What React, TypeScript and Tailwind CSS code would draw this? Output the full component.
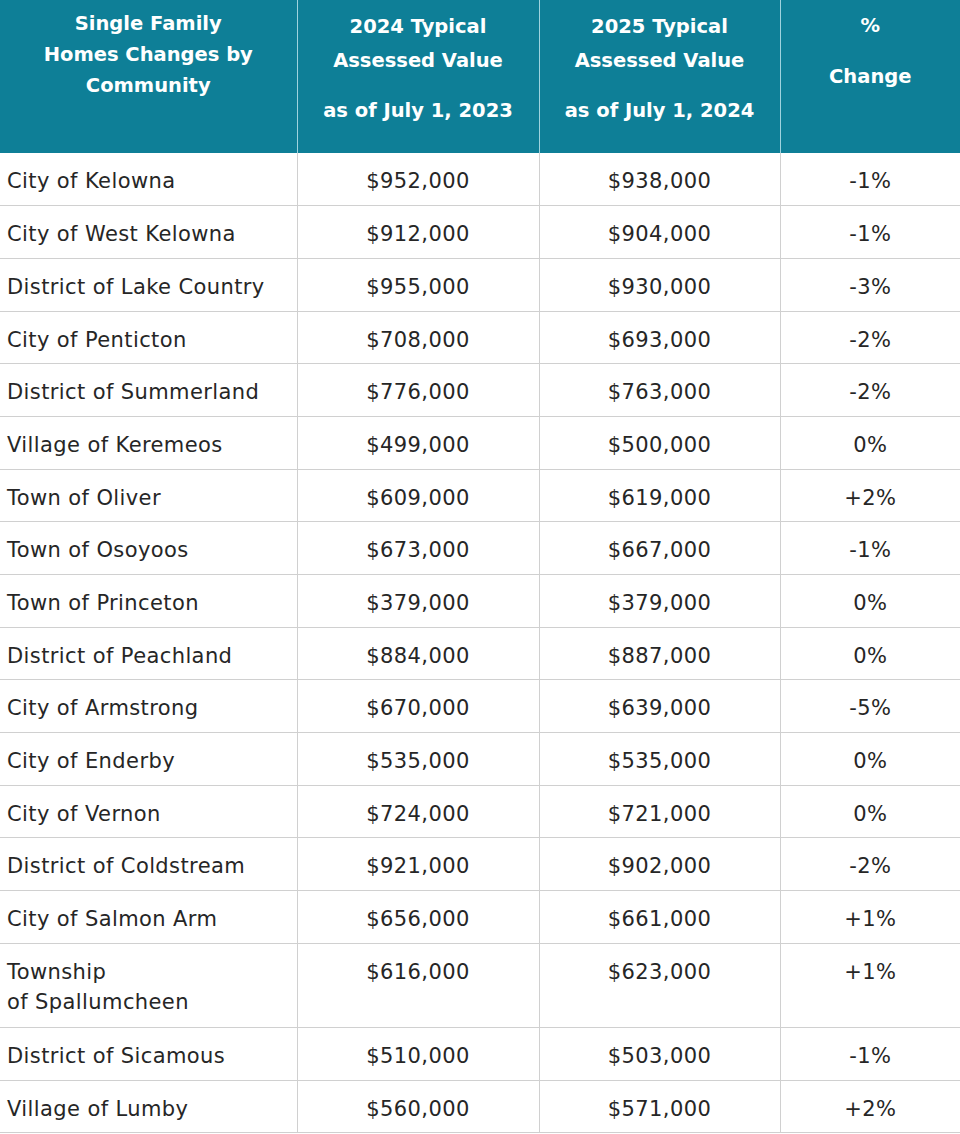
const rows: [string, string, string, string][] = [
  ["City of Kelowna", "$952,000", "$938,000", "-1%"],
  ["City of West Kelowna", "$912,000", "$904,000", "-1%"],
  ["District of Lake Country", "$955,000", "$930,000", "-3%"],
  ["City of Penticton", "$708,000", "$693,000", "-2%"],
  ["District of Summerland", "$776,000", "$763,000", "-2%"],
  ["Village of Keremeos", "$499,000", "$500,000", "0%"],
  ["Town of Oliver", "$609,000", "$619,000", "+2%"],
  ["Town of Osoyoos", "$673,000", "$667,000", "-1%"],
  ["Town of Princeton", "$379,000", "$379,000", "0%"],
  ["District of Peachland", "$884,000", "$887,000", "0%"],
  ["City of Armstrong", "$670,000", "$639,000", "-5%"],
  ["City of Enderby", "$535,000", "$535,000", "0%"],
  ["City of Vernon", "$724,000", "$721,000", "0%"],
  ["District of Coldstream", "$921,000", "$902,000", "-2%"],
  ["City of Salmon Arm", "$656,000", "$661,000", "+1%"],
  ["Township\nof Spallumcheen", "$616,000", "$623,000", "+1%"],
  ["District of Sicamous", "$510,000", "$503,000", "-1%"],
  ["Village of Lumby", "$560,000", "$571,000", "+2%"],
];

const App = () => {
  return (
    <div className="w-[960px] h-[1134px] overflow-hidden bg-white font-['DejaVu_Sans',sans-serif]">
      <table className="w-[960px] table-fixed border-collapse">
        <colgroup>
          <col className="w-[297px]" />
          <col className="w-[242px]" />
          <col className="w-[241px]" />
          <col className="w-[180px]" />
        </colgroup>
        <thead>
          <tr className="h-[153px] bg-[#0e7f97] text-white text-[19.5px] font-bold align-top">
            <th className="border-r border-[#9fd3de] px-4 pt-[8px] leading-[31px]">
              Single Family
              <br />
              Homes Changes by
              <br />
              Community
            </th>
            <th className="border-r border-[#9fd3de] px-2 pt-[10px] leading-[34px]">
              <p>2024 Typical</p>
              <p>Assessed Value</p>
              <p className="mt-[16px]">as of July 1, 2023</p>
            </th>
            <th className="border-r border-[#9fd3de] px-2 pt-[10px] leading-[34px]">
              <p>2025 Typical</p>
              <p>Assessed Value</p>
              <p className="mt-[16px]">as of July 1, 2024</p>
            </th>
            <th className="px-2 pt-[9px] leading-[34px]">
              <p>%</p>
              <p className="mt-[17px]">Change</p>
            </th>
          </tr>
        </thead>
        <tbody className="text-[21px] tracking-[0.4px] text-[#262626]">
          {rows.map(([name, a, b, c]) => (
            <tr
              key={name}
              className={
                name.includes("\n")
                  ? "h-[84px] align-top border-b border-[#d0d0d0]"
                  : "h-[52.7px] align-top border-b border-[#d0d0d0]"
              }
            >
              <td className="border-r border-[#d0d0d0] pl-[7px] pt-[13px] leading-[30px] whitespace-pre-line">
                {name}
              </td>
              <td className="border-r border-[#d0d0d0] text-center pt-[13px] leading-[30px]">
                {a}
              </td>
              <td className="border-r border-[#d0d0d0] text-center pt-[13px] leading-[30px]">
                {b}
              </td>
              <td className="text-center pt-[13px] leading-[30px]">{c}</td>
            </tr>
          ))}
        </tbody>
      </table>
    </div>
  );
};

export default App;
